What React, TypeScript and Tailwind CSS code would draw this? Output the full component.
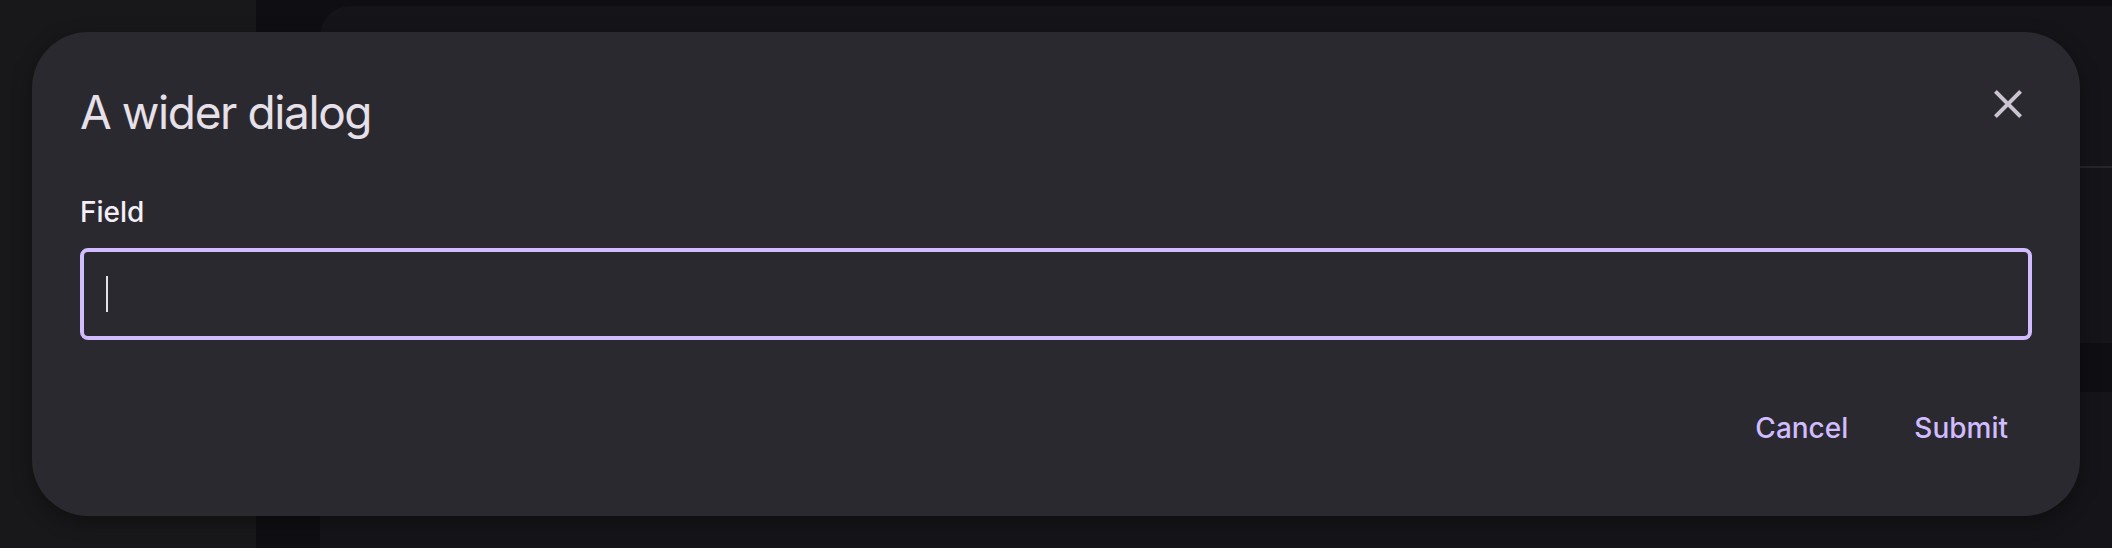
function CloseIcon() {
  return (
    <svg viewBox="0 0 24 24" width="48" height="48" fill="#cac4d0">
      <path d="M19 6.41L17.59 5 12 10.59 6.41 5 5 6.41 10.59 12 5 17.59 6.41 19 12 13.41 17.59 19 19 17.59 13.41 12z" />
    </svg>
  )
}

function Backdrop() {
  return (
    <div className='flex h-full'>
      <aside className='w-[256px] shrink-0 bg-[#18181a]' />
      <main className='ml-[64px] mt-[6px] flex flex-1 flex-col'>
        <section className='h-[337px] rounded-tl-[30px] bg-[#151418]'>
          <div className='h-[162px] border-b-2 border-[#26252a]' />
        </section>
        <div className='h-[49px]' />
        <section className='flex-1 bg-[#151418]' />
      </main>
    </div>
  )
}

function App() {
  return (
    <div className="relative h-[548px] w-[2112px] overflow-hidden bg-[#0f0e12] font-['Inter',sans-serif]">
      <Backdrop />
      <div className='absolute left-[32px] top-[32px] w-[2048px] rounded-[56px] bg-[#2b2930] p-[48px] shadow-[0_6px_20px_rgba(0,0,0,0.35)]'>
        <div className='flex items-start justify-between'>
          <h2 className='text-[46px] leading-[64px] font-normal tracking-[-1.4px] text-[#e6e0e9]'>A wider dialog</h2>
          <button className='flex h-[48px] w-[48px] items-center justify-center'>
            <CloseIcon />
          </button>
        </div>
        <label className='mt-[48px] block text-[28px] leading-[40px] font-medium text-[#f4eff6]'>Field</label>
        <div className='mt-[16px] flex h-[92px] items-center rounded-[8px] border-[4px] border-[#d0bcff] pl-[22px]'>
          <span className='h-[36px] w-[2px] bg-[#e6e0e9]' />
        </div>
        <div className='mt-[48px] flex justify-end gap-[18px]'>
          <button className='h-[80px] px-[24px] text-[28px] font-medium text-[#d0bcff]'>Cancel</button>
          <button className='h-[80px] px-[24px] text-[28px] font-medium text-[#d0bcff]'>Submit</button>
        </div>
      </div>
    </div>
  )
}

export default App
